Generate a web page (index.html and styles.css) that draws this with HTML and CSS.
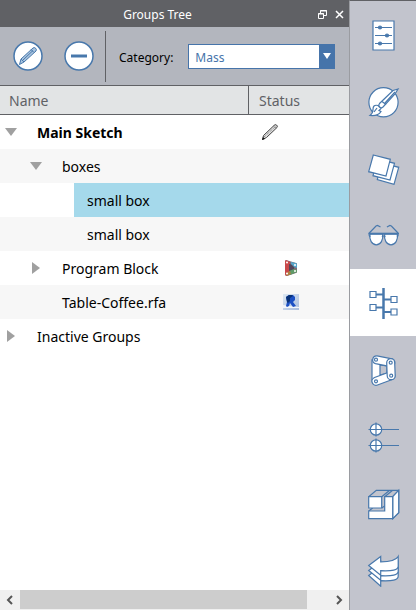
FILE: index.html
```html
<!DOCTYPE html>
<html lang="en">
<head>
<meta charset="utf-8">
<meta name="viewport" content="width=device-width, initial-scale=1">
<title>Groups Tree</title>
<link rel="stylesheet" href="styles.css">
</head>
<body>
<main class="panel">
  <header class="titlebar">
    <h1>Groups Tree</h1>
    <button type="button" aria-label="Float panel"><svg width="9" height="9" viewBox="0 0 9 9"><path d="M2.5 3V.5h6v5H6M.5 3.5h5v5h-5z"/><path d="M2 1h7M0 4h6"/></svg></button>
    <button type="button" aria-label="Close panel"><svg width="9" height="9" viewBox="0 0 9 9"><path class="cross" d="M1 1l7 7M8 1L1 8"/></svg></button>
  </header>
  <div class="toolbar">
    <button type="button" class="round" aria-label="Edit group"><svg width="30" height="30" viewBox="0 0 30 30"><circle cx="15" cy="15" r="14"/><path class="pencil" d="M6.500 23.500l1.500-5.500L20 7q1.500-1 2.700.300t.300 2.700L11 21zM8 18l3 3M18 8.500l3 3M9.500 19.500L20 9.500"/></svg></button>
    <button type="button" class="round" aria-label="Remove group"><svg width="30" height="30" viewBox="0 0 30 30"><circle cx="15" cy="15" r="14"/><path class="minus" d="M7 15h16"/></svg></button>
    <span class="divider"></span>
    <label for="category">Category:</label>
    <div class="combo">
      <select id="category"><option>Mass</option></select>
      <svg class="combo-arrow" width="16" height="25" viewBox="0 0 16 25"><path d="M4 9h8l-4 6z"/></svg>
    </div>
  </div>
  <div class="tree-area">
    <table class="tree">
      <thead><tr><th class="name">Name</th><th class="status">Status</th></tr></thead>
      <tbody>
        <tr class="level-0"><td><div class="node root"><button type="button" class="expander" aria-label="Collapse Main Sketch"><svg width="12" height="8" viewBox="0 0 12 8"><path d="M0 0h12L6 8z"/></svg></button>Main Sketch</div></td>
          <td class="mark editing"><svg width="18" height="18" viewBox="0 0 18 18"><path class="sketch" d="M1.500 16.500l1-4L13 2.500q1-1.500 2.500-.500t.500 2.500L5.500 14.500z"/><path class="hatch" d="M3 14L15 3M12.500 3l3 2.500"/><path class="lead" d="M1 17l1-3 2 2z"/></svg></td></tr>
        <tr class="level-1"><td><div class="node"><button type="button" class="expander" aria-label="Collapse boxes"><svg width="12" height="8" viewBox="0 0 12 8"><path d="M0 0h12L6 8z"/></svg></button>boxes</div></td><td></td></tr>
        <tr class="level-2 selected"><td><div class="node">small box</div></td><td></td></tr>
        <tr class="level-2"><td><div class="node">small box</div></td><td></td></tr>
        <tr class="level-1"><td><div class="node"><button type="button" class="expander" aria-label="Expand Program Block"><svg width="12" height="12" viewBox="0 0 12 12"><path d="M2 0v12l8-6z"/></svg></button>Program Block</div></td>
          <td class="mark"><svg width="16" height="16" viewBox="0 0 16 16"><path fill="#7d6a76" d="M3 0l10 3q1 0 1 1v8q0 1-1 1L4 16q-2 0-2-2V1z"/><path fill="#c8484a" d="M2 1l1-1 4 2v11l-4 3-1-2z"/><path fill="#54465a" d="M6 4l5 1v5l-5 2z"/><path fill="#55a4c8" d="M8 2l5 1 1 1v4l-3-1-3-3z"/><path fill="#609b69" d="M6 11l5-2 3 1v2l-7 3z"/><path fill="#b0803f" d="M3 13l4-2 1 3-4 2z"/><g fill="#fff"><circle cx="4" cy="2.500" r="1"/><circle cx="12" cy="5" r="1"/><circle cx="12" cy="11" r="1"/><circle cx="4" cy="13.500" r="1"/></g></svg></td></tr>
        <tr class="level-1"><td><div class="node leaf">Table-Coffee.rfa</div></td>
          <td class="mark"><svg width="16" height="16" viewBox="0 0 16 16"><defs><linearGradient id="tile" x2="1" y2="1"><stop stop-color="#dde8f2"/><stop offset="1" stop-color="#a9bddd"/></linearGradient></defs><path fill="url(#tile)" d="M0 0h16v16H0z"/><path fill="#f3f6fa" d="M0 11l6 1 10 1v1L0 14z"/><path fill="#1b50c4" d="M3 3l3-2h4l2 2v3l-2 2 3 4-3 1-3-4-1 3-2 1-1-1 1-4z"/><path fill="#083176" d="M3 3l3-2h3l1 1-3 2v3l-2 2-1-1z"/></svg></td></tr>
        <tr class="level-0"><td><div class="node"><button type="button" class="expander" aria-label="Expand Inactive Groups"><svg width="12" height="12" viewBox="0 0 12 12"><path d="M2 0v12l8-6z"/></svg></button>Inactive Groups</div></td><td></td></tr>
      </tbody>
    </table>
  </div>
  <div class="scrollbar">
    <button type="button" aria-label="Scroll left"><svg width="8" height="10" viewBox="0 0 8 10"><path d="M6 1L2 5l4 4"/></svg></button>
    <div class="track"><div class="thumb"></div></div>
    <button type="button" aria-label="Scroll right"><svg width="8" height="10" viewBox="0 0 8 10"><path d="M2 1l4 4-4 4"/></svg></button>
  </div>
</main>
<nav class="rail" aria-label="Panels">
  <button type="button" aria-label="Properties"><svg viewBox="0 0 33 33"><path class="face" d="M6 3h21v29H6z"/><path d="M8 9.500h17M8 17.500h17M8 25.500h17"/><g class="solid"><circle cx="13" cy="9.500" r="1.500"/><circle cx="20" cy="17.500" r="1.500"/><circle cx="13" cy="25.500" r="1.500"/></g></svg></button>
  <button type="button" aria-label="Materials"><svg viewBox="0 0 33 33"><circle class="face" cx="16.500" cy="17.300" r="14.600"/><path class="face" d="M31 4l-5 1.500L12.500 18.500q-1.500 2 0 3.500t3.500 0L28 9z"/><path d="M15 16.500l4 3M18 18L28 7"/><path class="face" d="M11 20.500c-4-1-5 1-5 4 0 2-.500 4-3 6 5 .500 9-.500 11-4l-2-1 2-2z"/><path d="M7 27l3-4"/></svg></button>
  <button type="button" aria-label="Layers"><svg viewBox="0 0 33 33"><path class="face" d="M14.600 11l17.100 4.300-4.700 17-16.700-4.600z"/><path class="face" d="M10.500 7l17 4.300L23 28 6 23.700z"/><path class="face" d="M6.300 3l17 4.300L19 24 1.700 19.700z"/></svg></button>
  <button type="button" aria-label="Visual styles"><svg viewBox="0 0 33 33"><path d="M2.300 14L9 7l1.500-.500 3 1.500M31 14l-6.600-7-1.500-.500-3 1.500"/><path class="face" d="M3 15h12.600c1 6-2 10.800-6.300 10.800S2 21 3 15zM17.700 15h12.600c1 6-2 10.800-6.300 10.800s-7.300-4.800-6.300-10.800z"/><path class="brow" d="M1.300 14.700h30.700"/><path d="M2 16l1 2M31.300 16l-1 2M15 18q1.700-2 3.300 0"/></svg></button>
  <button type="button" class="active" aria-label="Groups Tree" aria-current="page"><svg viewBox="0 0 33 33"><path class="trunk" d="M16.500 2v31"/><path class="branch" d="M9 8.500h7M17 13.500h7M9 21.500h7M17 26h7"/><path class="face" d="M3 5.500h6v6H3zM24 10.500h6v6h-6zM3 18.500h6v6H3zM24 23h6v6h-6z"/></svg></button>
  <button type="button" aria-label="Dynamo"><svg viewBox="0 0 33 33"><path class="face" fill-rule="evenodd" d="M5 7v21l18-5V10zM13 12v10l7-2v-7z"/><path class="face" d="M10 2.800l15 3a4 4 0 0 1-1.500 7.800L8.500 10.600A4 4 0 0 1 10 2.800z"/><path class="face" d="M7.500 24.500l15-5.500a4 4 0 0 1 2.800 7.500L10.500 32a4 4 0 0 1-3-7.500z"/><path class="face" d="M19.700 9.700a4 4 0 0 1 8 0l.500 13a4 4 0 0 1-8 0z"/><circle cx="9" cy="6.700" r="1.500"/><circle cx="23.700" cy="9.700" r="1.500"/><circle cx="24.200" cy="22.700" r="1.500"/><circle cx="9" cy="28.300" r="1.500"/></svg></button>
  <button type="button" aria-label="Levels"><svg viewBox="0 0 33 33"><circle class="face" cx="9" cy="9.500" r="5.700"/><circle class="face" cx="9" cy="25.500" r="5.700"/><path d="M1.500 9.500H32M1.500 25.500H32M9 2.500v14M9 18.500v14"/></svg></button>
  <button type="button" aria-label="Content library"><svg viewBox="0 0 33 33"><path d="M1.700 9.700l7.600-6.400h22.400v22.400l-6 6M14.700 9.700l8-6.400M17.700 9.700l8-6.400M25.700 9.700l6-6.400M1.700 24l4-3M14.700 21l3-2"/><path class="face" d="M25.700 9.700l6-6.400v22.400l-6 6z"/><path class="face" d="M1.700 9.700h13V21h-13z"/><path class="face" d="M1.700 24h16V9.700h8v22h-24z"/></svg></button>
  <button type="button" aria-label="Undo history"><svg viewBox="0 0 33 33"><g class="face"><path d="M1.700 21.500l12-9v5.300c9 0 15-1 17.500-5.300v9.700c0 4-6 5-17.500 4.500v5.500z"/><path d="M1.700 16.500l12-9v5.300c9 0 15-1 17.500-5.300v9.700c0 4-6 5-17.500 4.500v4.500z"/><path d="M1.700 11.500l12-9v5.300c9 0 15-1 17.500-5.300v9.700c0 4-6 5-17.500 4.500v4.500z"/></g></svg></button>
</nav>
</body>
</html>
```
FILE: styles.css
```css
* { box-sizing: border-box; }

body {
  display: flex;
  min-height: 100vh;
  margin: 0;
  background: #fff;
  color: #000;
  font-family: "Noto Sans", sans-serif;
  font-size: 14px;
}

button {
  display: flex;
  align-items: center;
  justify-content: center;
  padding: 0;
  border: 0;
  background: none;
}

svg { display: block; flex: none; }

.panel {
  display: flex;
  flex: 1;
  flex-direction: column;
  min-width: 0;
}

.titlebar {
  display: flex;
  align-items: center;
  gap: 8px;
  height: 27px;
  padding: 2px 5px 0;
  background: #606165;
  color: #fff;
}

.titlebar h1 {
  flex: 1;
  margin: 0;
  font-size: 12px;
  font-weight: 400;
  line-height: 16px;
  text-align: center;
}

.titlebar button { height: 16px; }
.titlebar path { fill: none; stroke: #fff; stroke-width: 1; }
.titlebar .cross { stroke-width: 1.5; }

.toolbar {
  display: flex;
  align-items: center;
  height: 59px;
  padding: 0 14px 0 13px;
  border-bottom: 1px solid #606165;
  background: #b3b6be;
  font-size: 12px;
}

.toolbar label { padding-top: 2px; }

.round { margin-right: 21px; }
.round circle { fill: #fff; stroke: #4878ac; stroke-width: 1.5; }
.round .pencil { fill: #a9c4df; stroke: #4878ac; stroke-width: 1; }
.round .minus { stroke: #4878ac; stroke-width: 3; }

.divider {
  align-self: stretch;
  width: 1px;
  margin: 4px 13px 3px -10px;
  background: #606165;
}

.combo {
  position: relative;
  flex: 1;
  margin-left: 15px;
}

.combo select {
  display: block;
  width: 100%;
  height: 25px;
  padding: 2px 20px 0 6px;
  border: 1px solid #4674aa;
  border-radius: 0;
  appearance: none;
  background: #fff;
  color: #4674aa;
  font: inherit;
}

.combo-arrow {
  position: absolute;
  top: 0;
  right: 0;
  background: #4674aa;
  fill: #fff;
  pointer-events: none;
}

.tree-area { flex: 1; }

.tree {
  width: 100%;
  border-collapse: separate;
  border-spacing: 0;
  table-layout: fixed;
}

.tree th {
  height: 29px;
  padding: 0 9px;
  border-bottom: 1px solid #606165;
  background: #e2e4e5;
  color: #606165;
  font-weight: 400;
  text-align: left;
}

.tree th.name { border-right: 1px solid #606165; }
.tree th.status { width: 100px; padding-left: 10px; }
.tree td { height: 34px; padding: 0; }
.tree tbody tr:nth-child(even) { background: #f7f7f7; }

.node {
  display: flex;
  align-items: center;
  height: 34px;
}

.root { font-weight: 700; }
.expander { width: 12px; height: 12px; margin-right: 20px; }
.expander path { fill: #a0a0a0; }
.level-0 .node { padding-left: 5px; }
.level-1 .node { padding-left: 30px; }
.level-1 .leaf { padding-left: 62px; }
.level-2 .node { margin-left: 74px; padding-left: 13px; }
.selected .node, .selected td + td { background: #a5d9eb; }

.mark svg { margin-left: 34px; }
.editing svg { margin-left: 12px; }
.sketch { fill: #ddd; stroke: #444; stroke-width: 1; }
.hatch { fill: none; stroke: #777; stroke-dasharray: 1 1; }
.lead { fill: #111; }

.scrollbar {
  display: flex;
  height: 20px;
  padding-bottom: 1px;
  background: #f0f0f0;
}

.scrollbar button { width: 20px; }
.scrollbar path { fill: none; stroke: #555; stroke-width: 2; }
.track { flex: 1; }
.thumb { width: 93%; height: 100%; background: #cdcdcd; }

.rail {
  display: flex;
  flex-direction: column;
  width: 67px;
  border-top: 1px solid #606165;
  border-left: 1px solid #9a9ca1;
  background: #c2c4cd;
}

.rail button { height: 67px; }
.rail .active { background: #fff; }

.rail svg {
  width: 33px;
  height: 33px;
  fill: none;
  stroke: #4878ac;
  stroke-width: 1.2;
}

.rail .face { fill: #fff; }
.rail .solid { fill: #4878ac; }
.rail .trunk { stroke-width: 2.5; }
.rail .branch, .rail .brow { stroke-width: 2; }
```
